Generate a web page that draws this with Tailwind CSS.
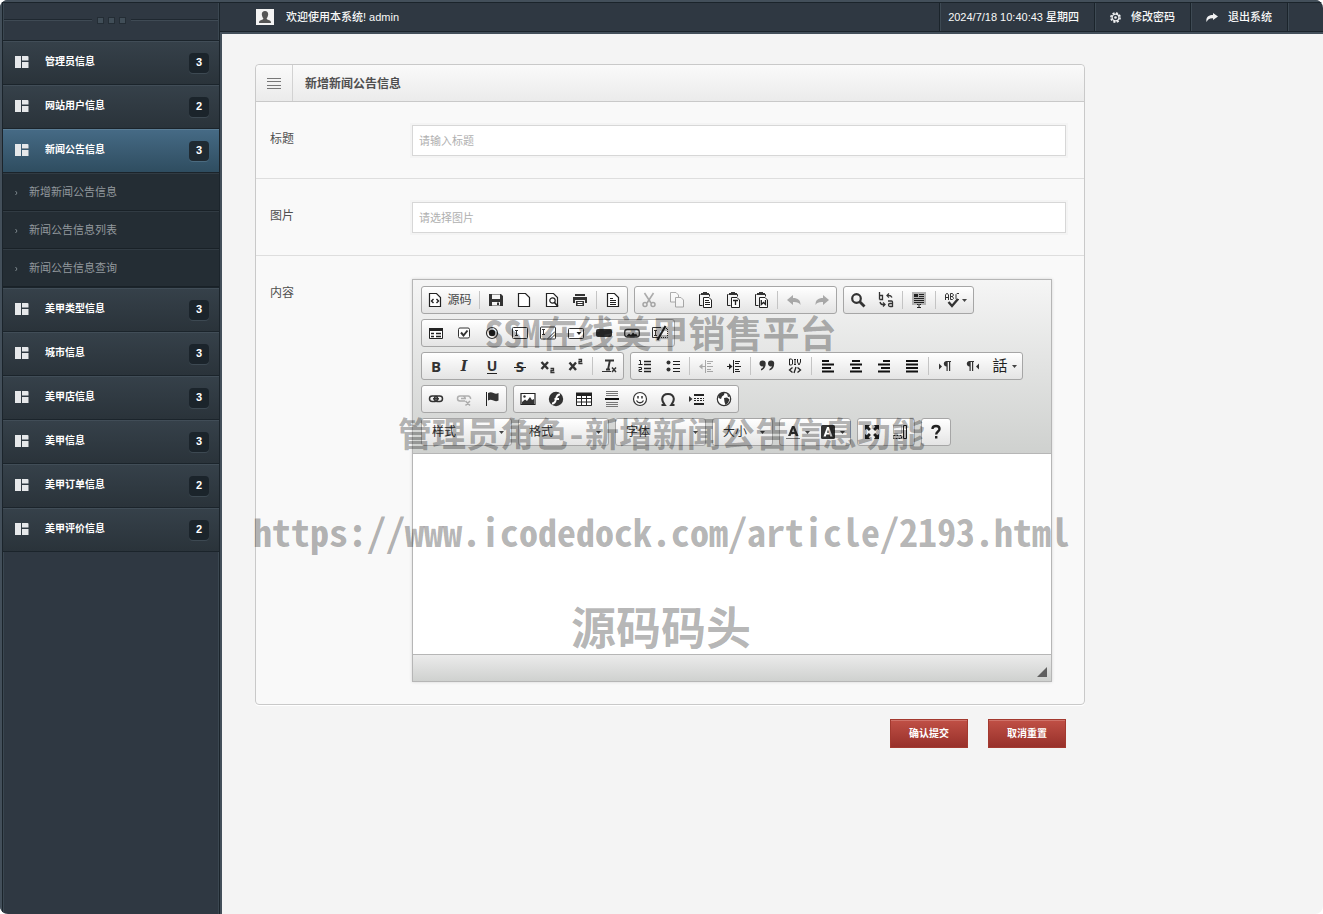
<!DOCTYPE html>
<html lang="zh-CN">
<head>
<meta charset="utf-8">
<meta name="viewport" content="width=device-width, initial-scale=1">
<title>新增新闻公告信息</title>
<script src="https://cdn.jsdelivr.net/npm/@tailwindcss/browser@4"></script>
</head>
<body class="bg-white font-['Liberation_Sans','Noto_Sans_CJK_SC',sans-serif] text-xs text-[#4f4f4f]">

<svg class="hidden" aria-hidden="true">
  <symbol id="i-grid" viewBox="0 0 14 12"><path fill="#e6e8ea" d="M0 0h6v12H0zM7 0h5.500a1 1 0 0 1 1 1v3H7zM7 6h6.500v6H7z"/><path fill="#8d949a" d="M7 4h6.500v1H7z"/></symbol>
  <symbol id="i-paste" viewBox="0 0 16 16"><path d="M3.500 2.500h-1v11h3M11.500 2.500h1v2" fill="none" stroke="#222"/><path d="M4 1h2V0h4v1h2v2H4z" fill="#333"/><path d="M6.500 5.500h5.500l2.500 2.500v7.500h-8z" fill="#fff" stroke="#222"/></symbol>
  <symbol id="i-page" viewBox="0 0 16 16"><path d="M2.500 1.500h7l4 4v9h-11z" fill="#fff" stroke="#222" stroke-width="1.200"/></symbol>
  <symbol id="i-caret" viewBox="0 0 5 3"><path d="M0 0h5L2.500 3z" fill="#444"/></symbol>
</svg>

<div class="flex min-h-screen overflow-hidden rounded-lg bg-[#f4f4f4]">

  <aside class="flex w-[220px] shrink-0 flex-col border-t-2 border-l-2 border-[#434f5a] bg-[#2f3842]">
    <div class="flex flex-1 flex-col border-x border-t border-[#1b242b]">
      <div class="flex h-[38px] items-center gap-[5px] border-b border-[#1b242b] px-px pb-[3px] shadow-[inset_1px_0_#3b4751,inset_-1px_0_#3b4751]">
        <span class="h-0.5 flex-1 border-t border-b border-t-[#1f2830] border-b-[#3f4a54]"></span>
        <span class="flex gap-1">
          <i class="size-[7px] border border-[#242d35] bg-[#414e58]"></i>
          <i class="size-[7px] border border-[#242d35] bg-[#414e58]"></i>
          <i class="size-[7px] border border-[#242d35] bg-[#414e58]"></i>
        </span>
        <span class="h-0.5 flex-1 border-t border-b border-t-[#1f2830] border-b-[#3f4a54]"></span>
      </div>

      <nav class="[&_.top]:flex [&_.top]:h-11 [&_.top]:items-center [&_.top]:border-b [&_.top]:border-[#1b242b] [&_.top]:bg-linear-to-b [&_.top]:from-[#36414a] [&_.top]:to-[#2a333a] [&_.top]:pr-2.5 [&_.top]:pl-3 [&_.top]:text-[10px] [&_.top]:font-bold [&_.top]:text-white [&_.top]:shadow-[inset_0_1px_#414d57] [&_.top>b]:flex [&_.top>b]:size-5 [&_.top>b]:items-center [&_.top>b]:justify-center [&_.top>b]:rounded [&_.top>b]:bg-[#1b242b] [&_.top>b]:text-[11px] [&_.top>b]:shadow-[0_1px_#3d4952] [&_.top>span]:ml-4 [&_.top>span]:flex-1 [&_.top>span]:pb-0.5 [&_.top>svg]:mb-px [&_.top>svg]:h-3 [&_.top>svg]:w-3.5">
        <a class="top" href="#"><svg><use href="#i-grid"/></svg><span>管理员信息</span><b>3</b></a>
        <a class="top" href="#"><svg><use href="#i-grid"/></svg><span>网站用户信息</span><b>2</b></a>
        <a class="flex h-11 items-center border-b border-[#1b242b] bg-linear-to-b from-[#466b86] to-[#2f4d60] pr-2.5 pl-3 text-[10px] font-bold text-white shadow-[inset_0_1px_#5b7d95]" href="#" aria-current="page"><svg class="mb-px h-3 w-3.5"><use href="#i-grid"/></svg><span class="ml-4 flex-1 pb-0.5">新闻公告信息</span><b class="flex size-5 items-center justify-center rounded bg-[#1f2a32] text-[11px] shadow-[0_1px_#4b6b80]">3</b></a>
        <ul class="border-b border-[#1b242b] bg-[#242d34] text-[11px] text-[#93999e] [&_a]:flex [&_a]:h-[38px] [&_a]:items-center [&_a]:gap-[11px] [&_a]:border-b [&_a]:border-[#192127] [&_a]:pt-0.5 [&_a]:pl-3 [&_a]:shadow-[inset_0_1px_#313b43]">
          <li><a href="#"><svg class="h-1 w-[3px]" viewBox="0 0 3 4"><path d="M.5 0l1.500 2-1.500 2" fill="none" stroke="#7b848b"/></svg>新增新闻公告信息</a></li>
          <li><a href="#"><svg class="h-1 w-[3px]" viewBox="0 0 3 4"><path d="M.5 0l1.500 2-1.500 2" fill="none" stroke="#7b848b"/></svg>新闻公告信息列表</a></li>
          <li><a href="#"><svg class="h-1 w-[3px]" viewBox="0 0 3 4"><path d="M.5 0l1.500 2-1.500 2" fill="none" stroke="#7b848b"/></svg>新闻公告信息查询</a></li>
        </ul>
        <a class="top" href="#"><svg><use href="#i-grid"/></svg><span>美甲类型信息</span><b>3</b></a>
        <a class="top" href="#"><svg><use href="#i-grid"/></svg><span>城市信息</span><b>3</b></a>
        <a class="top" href="#"><svg><use href="#i-grid"/></svg><span>美甲店信息</span><b>3</b></a>
        <a class="top" href="#"><svg><use href="#i-grid"/></svg><span>美甲信息</span><b>3</b></a>
        <a class="top" href="#"><svg><use href="#i-grid"/></svg><span>美甲订单信息</span><b>2</b></a>
        <a class="top" href="#"><svg><use href="#i-grid"/></svg><span>美甲评价信息</span><b>2</b></a>
      </nav>
      <div class="flex-1 shadow-[inset_1px_0_#3b4751,inset_-1px_0_#3b4751]"></div>
    </div>
  </aside>

  <div class="flex min-w-0 flex-1 flex-col">
    <header class="border-y-2 border-[#434f5a] bg-[#2f3842]">
      <div class="flex h-[30px] items-stretch border-y border-[#1b242b] text-[11px] font-medium text-[#f8f8f8]">
        <div class="flex flex-1 items-center gap-3 pl-9">
          <svg class="h-4 w-[18px]" viewBox="0 0 18 16"><path fill="#f3f3f3" d="M0 0h18v16H0z"/><path fill="#555" d="M9 2c2.200 0 3.200 1.400 3.200 3.200S11 9 10.600 9.600c0 .9 1 1.200 2.400 1.700 1.300.4 2 .9 2 2.700H3c0-1.800.7-2.300 2-2.700 1.400-.5 2.400-.8 2.400-1.700C7 9 5.800 7 5.800 5.200S6.800 2 9 2z"/></svg>
          <span>欢迎使用本系统! admin</span>
        </div>
        <span class="flex items-center border-l border-[#1b242b] pr-[15px] pl-2 shadow-[inset_1px_0_#3e4a54]">2024/7/18 10:40:43 星期四</span>
        <a href="#" class="flex items-center gap-2.5 border-l border-[#1b242b] px-[15px] shadow-[inset_1px_0_#3e4a54]"><svg class="size-[11px]" viewBox="0 0 11 11"><circle cx="5.500" cy="5.500" r="4.600" fill="none" stroke="#f1f2f3" stroke-width="1.600" stroke-dasharray="2.100 1.500"/><circle cx="5.500" cy="5.500" r="3.400" fill="none" stroke="#f1f2f3" stroke-width="1.200"/><circle cx="5.500" cy="5.500" r="1.300" fill="#f1f2f3"/></svg>修改密码</a>
        <a href="#" class="flex items-center gap-2.5 border-l border-[#1b242b] px-[15px] shadow-[inset_1px_0_#3e4a54]"><svg class="h-[9px] w-3" viewBox="0 0 12 9"><path fill="#f1f2f3" d="M7 0l5 3.600L7 7V5.200C3.500 5 1.700 6.200.6 9-.6 4.500 2.500 2 7 2z"/></svg>退出系统</a>
        <span class="w-9 border-l border-[#1b242b] shadow-[inset_1px_0_#3e4a54]"></span>
      </div>
    </header>

    <main class="relative flex-1 border-l-2 border-[#434f5a] pt-[30px] pr-6 pb-8 pl-[33px]">
      <form class="max-w-[830px]">
        <section class="rounded border border-[#c9c9c9] bg-[#f9f9f9] shadow-[0_1px_#fff]">
          <div class="flex h-[37px] items-stretch rounded-t border-b border-[#c9c9c9] bg-linear-to-b from-[#fafafa] to-[#ebebeb]">
            <span class="flex w-[37px] items-center justify-center border-r border-[#d2d2d2]"><svg class="h-[11px] w-3.5" viewBox="0 0 14 11"><path stroke="#777" d="M0 .5h14M0 3.500h14M0 7.500h14M0 10.500h14"/></svg></span>
            <h1 class="flex items-center pt-0.5 pl-3 text-xs font-bold">新增新闻公告信息</h1>
          </div>

          <div class="flex border-b border-[#dedede] pt-[23px] pr-[18px] pb-[22px] pl-3.5">
            <label for="title" class="w-[142px] shrink-0 pt-1.5">标题</label>
            <input id="title" type="text" placeholder="请输入标题" class="h-[31px] min-w-0 flex-1 border border-[#d7d7d7] bg-white px-1.5 text-[11px] shadow-[0_0_0_2px_#f4f4f4] placeholder:text-[#b0b0b0]">
          </div>
          <div class="flex border-b border-[#dedede] pt-[23px] pr-[18px] pb-[22px] pl-3.5">
            <label for="picture" class="w-[142px] shrink-0 pt-1.5">图片</label>
            <input id="picture" type="text" placeholder="请选择图片" class="h-[31px] min-w-0 flex-1 border border-[#d7d7d7] bg-white px-1.5 text-[11px] shadow-[0_0_0_2px_#f4f4f4] placeholder:text-[#b0b0b0]">
          </div>

          <div class="flex pt-[23px] pr-[18px] pb-[22px] pl-3.5">
            <label for="content" class="w-[142px] shrink-0 pt-1.5">内容</label>
            <div class="max-w-[640px] min-w-0 flex-1 border border-[#b6b6b6] shadow-[0_0_3px_#00000026]">
              <!-- Editor toolbar: one line of button groups per row -->
              <div class="space-y-[5px] border-b border-[#b6b6b6] bg-linear-to-b from-[#f5f5f5] to-[#cfd1cf] px-2 pt-1.5 pb-[7px] [&_.g]:flex [&_.g]:h-7 [&_.g]:rounded-[3px] [&_.g]:border [&_.g]:border-[#a6a6a6] [&_.g]:bg-linear-to-b [&_.g]:from-white [&_.g]:to-[#e4e4e4] [&_.r]:flex [&_.r]:gap-1.5 [&_button]:flex [&_button]:h-[26px] [&_button]:min-w-7 [&_button]:items-center [&_button]:justify-center [&_button]:gap-1 [&_hr]:mx-0.5 [&_hr]:my-1 [&_hr]:h-[18px] [&_hr]:w-px [&_hr]:border-0 [&_hr]:bg-[#c4c4c4] [&_.s]:size-4">
                <div class="r">
                  <div class="g">
                    <button type="button" class="w-[55px] text-[#484848]"><svg class="s" viewBox="0 0 16 16"><use href="#i-page"/><path d="M6.500 7L4.500 9l2 2M9.500 7l2 2-2 2" fill="none" stroke="#222" stroke-width="1.400"/></svg>源码</button>
                    <hr>
                    <button type="button" aria-label="保存"><svg class="s" viewBox="0 0 16 16"><path d="M1 2h12l2 2v10H1z" fill="#333"/><path d="M4 2.500h8V7H4zM4 10h8v3.500H4z" fill="#f4f4f4"/><path d="M9 10.500h2v2.500H9z" fill="#333"/></svg></button>
                    <button type="button" aria-label="新建"><svg class="s"><use href="#i-page"/></svg></button>
                    <button type="button" aria-label="预览"><svg class="s" viewBox="0 0 16 16"><use href="#i-page"/><circle cx="8.500" cy="8.500" r="2.700" fill="#fff" stroke="#222" stroke-width="1.200"/><path d="M10.500 10.500l3.500 4" stroke="#222" stroke-width="1.600"/></svg></button>
                    <button type="button" aria-label="打印"><svg class="s" viewBox="0 0 16 16"><path d="M3 2h10v2H3zM1 5h14v6h-2V8H3v3H1zM4 9h8v5H4z" fill="#333"/><path d="M5.500 10.500h5M5.500 12.500h5" stroke="#fff"/></svg></button>
                    <hr>
                    <button type="button" aria-label="模板"><svg class="s" viewBox="0 0 16 16"><use href="#i-page"/><path d="M5 6.500h3M5 8.500h6M5 10.500h6M5 12.500h6" stroke="#222"/></svg></button>
                  </div>
                  <div class="g">
                    <button type="button" aria-label="剪切" class="opacity-35"><svg class="s" viewBox="0 0 16 16" fill="none" stroke="#222"><path d="M3.500 1l6.500 10M12.500 1L6 11" stroke-width="1.600"/><circle cx="4" cy="12.500" r="2" stroke-width="1.500"/><circle cx="12" cy="12.500" r="2" stroke-width="1.500"/></svg></button>
                    <button type="button" aria-label="复制" class="opacity-35"><svg class="s" viewBox="0 0 16 16" fill="#fff" stroke="#222"><path d="M1.500 .5H7l2.500 2.500v7h-8z"/><path d="M6.500 5.500H12l2.500 2.500v7h-8z"/></svg></button>
                    <button type="button" aria-label="粘贴"><svg class="s" viewBox="0 0 16 16"><use href="#i-paste"/><path d="M8 8.500h4M8 10.500h5M8 12.500h5" stroke="#222"/></svg></button>
                    <button type="button" aria-label="粘贴为文本"><svg class="s" viewBox="0 0 16 16"><use href="#i-paste"/><path d="M8 8.500h5M10.500 8.500V13" stroke="#222" stroke-width="1.300"/></svg></button>
                    <button type="button" aria-label="从 Word 粘贴"><svg class="s" viewBox="0 0 16 16"><use href="#i-paste"/><path d="M8.300 8v4.500l2.200-2 2 2V8" fill="none" stroke="#222" stroke-width="1.300"/></svg></button>
                    <hr>
                    <button type="button" aria-label="撤消" class="opacity-35"><svg class="s" viewBox="0 0 16 16"><path d="M1 8l6-5v3c5 0 7.500 2 7.500 7C13 10.500 11 9.800 7 10v3z" fill="#222"/></svg></button>
                    <button type="button" aria-label="重做" class="opacity-35"><svg class="s" viewBox="0 0 16 16"><path d="M15 8L9 3v3c-5 0-7.500 2-7.500 7C3 10.500 5 9.800 9 10v3z" fill="#222"/></svg></button>
                  </div>
                  <div class="g">
                    <button type="button" aria-label="查找"><svg class="s" viewBox="0 0 16 16"><circle cx="6.500" cy="6.500" r="4.300" fill="none" stroke="#333" stroke-width="2.200"/><path d="M9.500 9.500l5 5" stroke="#333" stroke-width="2.800"/></svg></button>
                    <button type="button" aria-label="替换"><svg class="s" viewBox="0 0 16 16" fill="none" stroke="#333" stroke-width="1.300"><path d="M1.500 0v7.500M1.500 3.500h3v4h-3M10 9h3.500a1 1 0 0 1 1 1v5M14.500 11.500H12a1.500 1.500 0 0 0 0 3h2.500"/><path d="M14 5.500C13 3.500 12 3 9.500 3.500M11 1.500L9 3.500l2 2M2 10c.5 2.500 2 3 4.500 2.500M5 10.500l2 2-2 2"/></svg></button>
                    <hr>
                    <button type="button" aria-label="全选"><svg class="s" viewBox="0 0 16 16"><path d="M1 0h14v13H1z" fill="#b4b4b4"/><path d="M3 2h4v3H3z" fill="#222"/><path d="M8 2.500h5M8 4.500h5M3 6.500h10M3 8.500h10M3 10.500h10" stroke="#222"/><path d="M6 12.500h1.500m1 0H10M8 12.500v3M6 15.500h4" stroke="#222"/></svg></button>
                    <hr>
                    <button type="button" aria-label="拼写检查" class="w-[35px]"><svg class="h-4 w-6" viewBox="0 0 24 16" fill="none" stroke="#333"><path d="M1.500 8V3l1-1.500h1L4.500 3v5M1.500 5.500h3M6.500 1.500v6h2l1-1-1-2h-2 2l1-1.500-1-1.500zM15 1.500h-2l-1 1v4l1 1h2"/><path d="M4.500 10l3.500 4 6-7" stroke-width="2.400"/><path d="M18 7h5l-2.500 3z" fill="#444" stroke="none"/></svg></button>
                  </div>
                </div>

                <div class="r">
                  <div class="g">
                    <button type="button" aria-label="表单"><svg class="s" viewBox="0 0 16 16"><path d="M1.500 3.500h13v10h-13z" fill="#fff" stroke="#222"/><path d="M1 3h14v3H1z" fill="#222"/><path d="M3 8.500h3M3 11.500h3M8 8.500h5M8 11.500h5" stroke="#222" stroke-width="1.500"/></svg></button>
                    <button type="button" aria-label="复选框"><svg class="s" viewBox="0 0 16 16" fill="none" stroke="#333"><rect x="2.500" y="3" width="11" height="10" rx="1.500" fill="#fff"/><path d="M5 7.500l2.500 3 4-5" stroke-width="2"/></svg></button>
                    <button type="button" aria-label="单选按钮"><svg class="s" viewBox="0 0 16 16"><circle cx="8" cy="8" r="5.500" fill="#fff" stroke="#333" stroke-width="1.200"/><circle cx="8" cy="8" r="3.200" fill="#222"/></svg></button>
                    <button type="button" aria-label="单行文本"><svg class="s" viewBox="0 0 16 16" fill="none" stroke="#333"><rect x=".5" y="2.500" width="15" height="11" rx="1" fill="#fff"/><path d="M3 5.500h3M3 10.500h3M4.500 5.500v5"/></svg></button>
                    <button type="button" aria-label="多行文本"><svg class="s" viewBox="0 0 16 16" fill="none" stroke="#333"><rect x=".5" y="2" width="15" height="12" rx="1" fill="#fff"/><path d="M2 4.500h3M2 9.500h3M3.500 4.500v5M8 13.500l7-7M11 13.500l4-4"/></svg></button>
                    <button type="button" aria-label="列表"><svg class="s" viewBox="0 0 16 16"><rect x=".5" y="3.500" width="15" height="10" rx="1" fill="#fff" stroke="#333"/><path d="M8.500 7h5L11 10z" fill="#222"/></svg></button>
                    <button type="button" aria-label="按钮"><svg class="s" viewBox="0 0 16 16"><rect y="4" width="16" height="8" rx="2" fill="#333"/></svg></button>
                    <button type="button" aria-label="图像按钮"><svg class="s" viewBox="0 0 16 16"><rect x=".7" y="4.500" width="14.600" height="7.500" rx="2.500" fill="#ddd" stroke="#333" stroke-width="1.300"/><path d="M2 11.500l3-3 2 1.500 2-2.500 2 2 1-1 2 3z" fill="#222"/></svg></button>
                    <button type="button" aria-label="隐藏域"><svg class="s" viewBox="0 0 16 16" fill="none" stroke="#333"><path d="M9 2.500H.5v10H6M2 5.500h3M2 10.500h3M3.500 5.500v5"/><path d="M12 3.500h3.500v9H8" stroke-dasharray="1 1"/><path d="M13.500 1L5.500 15" stroke="#222" stroke-width="2"/></svg></button>
                  </div>
                </div>

                <div class="r">
                  <div class="g text-[15px] text-[#333]">
                    <button type="button" aria-label="加粗"><b class="font-['Open_Sans']">B</b></button>
                    <button type="button" aria-label="倾斜"><b class="font-['DejaVu_Serif'] text-sm italic">I</b></button>
                    <button type="button" aria-label="下划线"><b class="border-b border-[#222] font-['Open_Sans'] text-sm leading-[14px]">U</b></button>
                    <button type="button" aria-label="删除线"><b class="relative font-['Open_Sans']">S<i class="absolute inset-x-[-2px] top-[11px] h-px bg-[#222]"></i></b></button>
                    <button type="button" aria-label="下标"><svg class="s" viewBox="0 0 16 16" fill="none" stroke="#333"><path d="M1.500 4l6.500 7M8 4l-6.500 7" stroke-width="2.400"/><path d="M10.500 10.500h3v2h-2.500v2h3.500" stroke-width="1.300"/></svg></button>
                    <button type="button" aria-label="上标"><svg class="s" viewBox="0 0 16 16" fill="none" stroke="#333"><path d="M1.500 4.500L8 12M8 4.500L1.500 12" stroke-width="2.400"/><path d="M10.500 1.500h3v2h-2.500v2h3.500" stroke-width="1.300"/></svg></button>
                    <hr>
                    <button type="button" aria-label="清除格式"><svg class="s" viewBox="0 0 16 16" fill="none" stroke="#333"><path d="M4 2.500h9M8.800 3L7 11.500M5 11.500h4" stroke-width="1.900"/><path d="M1 13.500h9"/><path d="M11 9.500l4 4.500M15 9.500L11 14" stroke-width="1.500"/></svg></button>
                  </div>
                  <div class="g">
                    <button type="button" aria-label="编号列表"><svg class="s" viewBox="0 0 16 16" fill="none" stroke="#222"><path d="M2 2.500h1.500v4M1.500 6.500h4M1.500 9.500h3v2H2v2h3"/><path d="M7 3.500h7M7 6.500h7M7 10.500h7M7 13.500h7" stroke-width="1.300"/></svg></button>
                    <button type="button" aria-label="项目列表"><svg class="s" viewBox="0 0 16 16"><circle cx="3.500" cy="4.500" r="2" fill="#333"/><circle cx="3.500" cy="11.500" r="2" fill="#333"/><path d="M8 3.500h7M8 6.500h7M8 10.500h7M8 13.500h7" stroke="#222" stroke-width="1.200"/></svg></button>
                    <hr>
                    <button type="button" aria-label="减少缩进" class="opacity-35"><svg class="s" viewBox="0 0 16 16"><path d="M7.500 2v13M9 3.500h6M9 5.500h4M9 8.500h6M9 11.500h4M9 13.500h6M2 8.500h5" stroke="#222"/><path d="M1 8.500l3.500-3v6z" fill="#222"/></svg></button>
                    <button type="button" aria-label="增加缩进"><svg class="s" viewBox="0 0 16 16"><path d="M7.500 2v13M9 3.500h5M9 5.500h4M9 8.500h6M9 11.500h4M9 13.500h5M1 8.500h4" stroke="#222"/><path d="M6.500 8.500L3 5.500v6z" fill="#222"/></svg></button>
                    <hr>
                    <button type="button" aria-label="块引用"><svg class="s" viewBox="0 0 16 16" fill="#333"><path d="M.5 5.500a3 3 0 1 1 6.200 0c0 3.500-1.500 6-4.700 7v-1.500c1.600-.8 2.200-1.700 2.300-2.700C2 8.800.5 7.500.5 5.500zM9 5.500a3 3 0 1 1 6.200 0c0 3.500-1.500 6-4.700 7v-1.500c1.600-.8 2.200-1.700 2.300-2.700C10.500 8.800 9 7.500 9 5.500z"/></svg></button>
                    <button type="button" aria-label="创建 DIV 容器"><svg class="s" viewBox="0 0 16 16" fill="none" stroke="#222"><path d="M2.500 1v6h2l1-1V2l-1-1zM7 1.500h2M8 1.500v5M7 6.500h2M10.500 1v3l1.500 3 1.500-3V1"/><path d="M5.500 9.500l-3 2.500 3 2.500M10.500 9.500l3 2.500-3 2.500M9 9l-2 6" stroke-width="1.300"/></svg></button>
                    <hr>
                    <button type="button" aria-label="左对齐"><svg class="s" viewBox="0 0 16 16"><path d="M2 3h7M2 6.500h12M2 10h9M2 13.500h12" stroke="#111" stroke-width="2"/></svg></button>
                    <button type="button" aria-label="居中"><svg class="s" viewBox="0 0 16 16"><path d="M4 3h8M2 6.500h12M4 10h8M2 13.500h12" stroke="#111" stroke-width="2"/></svg></button>
                    <button type="button" aria-label="右对齐"><svg class="s" viewBox="0 0 16 16"><path d="M7 3h7M2 6.500h12M5 10h9M2 13.500h12" stroke="#111" stroke-width="2"/></svg></button>
                    <button type="button" aria-label="两端对齐"><svg class="s" viewBox="0 0 16 16"><path d="M2 3h12M2 6.500h12M2 10h12M2 13.500h12" stroke="#111" stroke-width="2"/></svg></button>
                    <hr>
                    <button type="button" aria-label="文字从左到右"><svg class="s" viewBox="0 0 16 16" fill="#333"><path d="M2 5.500L5 8.500l-3 3zM14 3H9a2.800 2.800 0 0 0 0 5.500h.5V13h1.200V4H12v9h1.200V4h.8z"/></svg></button>
                    <button type="button" aria-label="文字从右到左"><svg class="s" viewBox="0 0 16 16" fill="#333"><path d="M14 5.500L11 8.500l3 3zM9 3H4a2.800 2.800 0 0 0 0 5.500h.5V13h1.200V4H7v9h1.200V4H9z"/></svg></button>
                    <button type="button" aria-label="设置语言" class="w-[35px]"><span class="text-[15px] leading-4 text-[#222]">話</span><svg class="h-[3px] w-[5px]"><use href="#i-caret"/></svg></button>
                  </div>
                </div>

                <div class="r">
                  <div class="g">
                    <button type="button" aria-label="插入超链接"><svg class="s" viewBox="0 0 16 16" fill="none" stroke="#333" stroke-width="1.500"><rect x="1.500" y="5" width="8" height="5.500" rx="2.700"/><rect x="6.500" y="5" width="8" height="5.500" rx="2.700"/><path d="M5 7.800h6"/></svg></button>
                    <button type="button" aria-label="取消超链接" class="opacity-35"><svg class="s" viewBox="0 0 16 16" fill="none" stroke="#333" stroke-width="1.500"><path d="M9 10H4a2.500 2.500 0 0 1 0-5h3a2.500 2.500 0 0 1 2 2.500M5 7.500h5M7 5h5a2.500 2.500 0 0 1 2.500 3M9.500 10l4.500 4.500M14 10l-4.500 4.500"/></svg></button>
                    <button type="button" aria-label="锚点"><svg class="s" viewBox="0 0 16 16"><path d="M2.500 1v14" stroke="#222"/><path d="M4 2c2-1 3.500-1 5.500 0s3 1 5 0v7.500c-2 1-3 .8-5 0s-3.500-1-5.500 0z" fill="#333"/></svg></button>
                  </div>
                  <div class="g">
                    <button type="button" aria-label="图像"><svg class="s" viewBox="0 0 16 16"><path d="M1 2.500h14v11H1z" fill="#fff" stroke="#222" stroke-width="1.200"/><circle cx="4.500" cy="5.500" r="1.200" fill="#333"/><path d="M2 13v-2l3-2.500 2 1.500 3-4 2 3 2-1v5z" fill="#333"/></svg></button>
                    <button type="button" aria-label="Flash"><svg class="s" viewBox="0 0 16 16"><circle cx="8" cy="8" r="7.200" fill="#333"/><path d="M12 3.500c-3-.2-3.500 2-4 4.500s-1.500 4.500-4 4.500M6.500 8H11" fill="none" stroke="#fff" stroke-width="1.900"/></svg></button>
                    <button type="button" aria-label="表格"><svg class="s" viewBox="0 0 16 16"><path d="M.5 2.500h15v12H.5z" fill="#fff" stroke="#222"/><path d="M0 1.500h16V5H0z" fill="#222"/><path d="M5.500 4v10M10.500 4v10M1 7.500h14M1 11h14" stroke="#222"/></svg></button>
                    <button type="button" aria-label="水平线"><svg class="s" viewBox="0 0 16 16"><path d="M2 .5h12M2 2.500h12M2 4.500h12M2 11.500h12M2 13.500h12M2 15.500h12" stroke="#777"/><path d="M1 8h14" stroke="#111" stroke-width="2"/></svg></button>
                    <button type="button" aria-label="表情符"><svg class="s" viewBox="0 0 16 16" fill="none" stroke="#333"><circle cx="8" cy="8" r="6.500" stroke-width="1.200" fill="#fff"/><path d="M4.500 9.500c1.500 3 5.500 3 7 0" stroke-width="1.300"/><path d="M6 5v2.500M10 5v2.500" stroke-width="1.500"/></svg></button>
                    <button type="button" aria-label="特殊符号"><svg class="s" viewBox="0 0 16 16"><path d="M1.500 14h3.300C2.500 11 2 9.500 2.200 7.700 2.500 4.800 5 3 8 3s5.500 1.800 5.800 4.700c.2 1.800-.3 3.300-2.600 6.300h3.300" fill="none" stroke="#333" stroke-width="2"/></svg></button>
                    <button type="button" aria-label="分页符"><svg class="s" viewBox="0 0 16 16"><path d="M1 5l3.500 3L1 11z" fill="#333"/><path d="M6 4h10M6 13h10" stroke="#222" stroke-width="2"/><path d="M6 7.500h10M6 9.500h10" stroke="#222" stroke-dasharray="2 1"/></svg></button>
                    <button type="button" aria-label="IFrame"><svg class="s" viewBox="0 0 16 16"><circle cx="8" cy="8" r="6.700" fill="#fff" stroke="#333" stroke-width="1.200"/><path d="M2.500 4.500C4 2.500 6 1.500 8.500 2L8 4 6 5.500 5 8 2.500 7zM8 7l3-.5 2.500 2-1.500 3.500-2.500 2L8.500 11zM11 2.500l3 3-2 .5z" fill="#333"/></svg></button>
                  </div>
                </div>

                <div class="r [&_.c]:relative [&_.c]:w-[91px] [&_.c>svg]:pointer-events-none [&_.c>svg]:absolute [&_.c>svg]:top-[12px] [&_.c>svg]:right-[7px] [&_.c>svg]:h-[3px] [&_.c>svg]:w-[5px] [&_select]:w-full [&_select]:appearance-none [&_select]:bg-transparent [&_select]:pl-2.5 [&_select]:text-[#333]">
                  <div class="g c"><select aria-label="样式"><option>样式</option></select><svg><use href="#i-caret"/></svg></div>
                  <div class="g c"><select aria-label="格式"><option>格式</option></select><svg><use href="#i-caret"/></svg></div>
                  <div class="g c"><select aria-label="字体"><option>字体</option></select><svg><use href="#i-caret"/></svg></div>
                  <div class="g relative w-[61px]"><select aria-label="大小"><option>大小</option></select><svg class="pointer-events-none absolute top-[12px] right-[7px] h-[3px] w-[5px]"><use href="#i-caret"/></svg></div>
                  <div class="g">
                    <button type="button" aria-label="文本颜色" class="w-[35px]"><svg class="s" viewBox="0 0 16 16"><path d="M3 12L7 2h2.500l4 10h-2.800l-.7-2H6.300l-.7 2zM7 8h2.400L8.200 4.500z" fill="#333"/><path d="M1 14.500h14" stroke="#777"/></svg><svg class="h-[3px] w-[5px]"><use href="#i-caret"/></svg></button>
                    <button type="button" aria-label="背景颜色" class="w-[35px]"><svg class="s" viewBox="0 0 16 16"><rect x="1" y="1" width="14" height="14" rx="1.500" fill="#333"/><path d="M3.500 12.500L7 3h2l3.500 9.500h-2.300l-.6-2H6.400l-.6 2zM7 8.700h2L8 5.500z" fill="#fff"/></svg><svg class="h-[3px] w-[5px]"><use href="#i-caret"/></svg></button>
                  </div>
                  <div class="g">
                    <button type="button" aria-label="全屏"><svg class="s" viewBox="0 0 16 16"><path d="M1 1h5L4.700 2.700l2.200 2.200-2 2-2.200-2.200L1 6zM15 1v5l-1.700-1.300-2.200 2.200-2-2 2.200-2.200L10 1zM1 15v-5l1.700 1.300 2.200-2.200 2 2-2.200 2.200L6 15zM15 15h-5l1.300-1.700-2.200-2.200 2-2 2.200 2.200L15 10z" fill="#222"/></svg></button>
                    <button type="button" aria-label="显示区块"><svg class="s" viewBox="0 0 16 16" fill="none" stroke="#222"><path d="M1.500 1.500h8v8h-8z" stroke="#777" stroke-dasharray="1 1"/><path d="M11.500 1.500h3v13h-3z"/><path d="M1.500 11.500h8v3h-8z" stroke-dasharray="2 1"/></svg></button>
                  </div>
                  <div class="g"><button type="button" aria-label="关于"><svg class="s" viewBox="0 0 16 16"><path d="M4.500 5c0-2 1.500-3 3.500-3s3.500 1 3.500 3c0 2.500-3.300 2.500-3.300 5.500M8.200 12v2.500" fill="none" stroke="#222" stroke-width="2.400"/></svg></button></div>
                </div>
              </div>
              <textarea id="content" class="block h-[200px] w-full resize-none bg-white p-5"></textarea>
              <div class="flex h-[27px] items-end justify-end border-t border-[#b6b6b6] bg-linear-to-b from-[#ebebeb] to-[#cfd1cf] p-1"><svg class="size-2.5" viewBox="0 0 10 10"><path d="M10 0v10H0z" fill="#606060"/></svg></div>
            </div>
          </div>
        </section>

        <div class="mt-3.5 mr-[19px] flex justify-end gap-5">
          <button type="submit" class="h-[29px] w-[78px] border border-[#a3392f] bg-linear-to-b from-[#c05046] to-[#98302a] text-[10px] font-bold text-white shadow-[inset_0_1px_#cf7269]">确认提交</button>
          <button type="reset" class="h-[29px] w-[78px] border border-[#a3392f] bg-linear-to-b from-[#c05046] to-[#98302a] text-[10px] font-bold text-white shadow-[inset_0_1px_#cf7269]">取消重置</button>
        </div>
      </form>

      <!-- Watermark laid over the form -->
      <div class="pointer-events-none absolute inset-0 overflow-hidden font-['Noto_Sans_Mono_CJK_SC','Noto_Sans_CJK_SC',monospace] leading-none font-bold whitespace-nowrap text-black/30">
        <p class="absolute top-[280px] left-[263px] text-[37px]">SSM在线美甲销售平台</p>
        <p class="absolute top-[382px] left-[176px] text-[34px]">管理员角色-新增新闻公告信息功能</p>
        <p class="absolute top-[478px] left-[31px] text-[38px]">https://www.icodedock.com/article/2193.html</p>
        <p class="absolute top-[569px] left-[349px] text-[45px]">源码码头</p>
      </div>
    </main>
  </div>
</div>
</body>
</html>
